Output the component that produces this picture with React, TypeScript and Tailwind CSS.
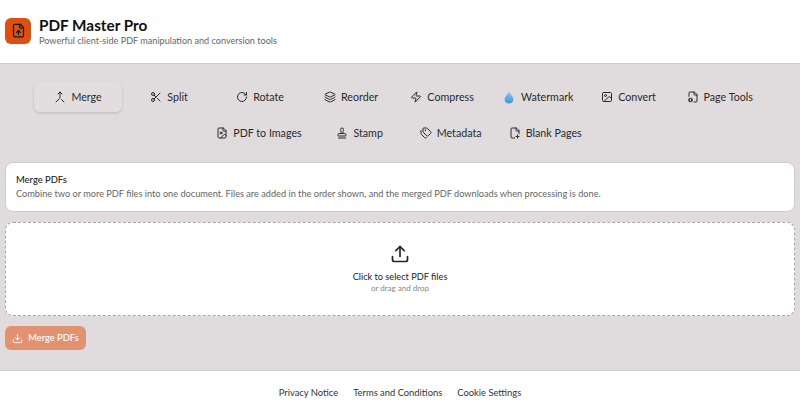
import { Download, FileCog, FileImage, FilePlus2, FileUp, Image, Layers, Merge, RotateCw, Scissors, Stamp, Tags, Upload, Zap } from 'lucide-react'
import type { ComponentType } from 'react'

function Droplet() {
  return (
    <svg viewBox="0 0 10 13" className="mr-[2px] h-[13px] w-[10px] shrink-0">
      <defs>
        <linearGradient id="drop" x1="0" y1="0" x2="0" y2="1">
          <stop offset="0" stopColor="#8fc4ee" />
          <stop offset="1" stopColor="#3f95dc" />
        </linearGradient>
      </defs>
      <path d="M5 0.5C5.5 2.4 9.4 5.4 9.4 8.5C9.4 11 7.4 12.6 5 12.6C2.6 12.6 0.6 11 0.6 8.5C0.6 5.4 4.5 2.4 5 0.5Z" fill="url(#drop)" />
    </svg>
  )
}

type Tab = { label: string; icon: ComponentType<{ className?: string }>; active?: boolean; pad?: string }

const rowOne: Tab[] = [
  { label: 'Merge', icon: Merge, active: true },
  { label: 'Split', icon: Scissors },
  { label: 'Rotate', icon: RotateCw },
  { label: 'Reorder', icon: Layers },
  { label: 'Compress', icon: Zap },
  { label: 'Watermark', icon: Droplet, pad: 'pl-[15px] pr-[8px]' },
  { label: 'Convert', icon: Image },
  { label: 'Page Tools', icon: FileCog },
]

const rowTwo: Tab[] = [
  { label: 'PDF to Images', icon: FileImage },
  { label: 'Stamp', icon: Stamp },
  { label: 'Metadata', icon: Tags },
  { label: 'Blank Pages', icon: FilePlus2 },
]

function TabButton({ tab }: { tab: Tab }) {
  const Icon = tab.icon
  return (
    <button
      className={
        'flex h-[30px] min-w-[88px] items-center justify-center gap-[5px] rounded-md text-[10.7px] text-[#2a2a2a] ' +
        (tab.pad ?? 'px-[11px]') + ' ' +
        (tab.active ? 'bg-[#e2dee0] shadow-[0_1px_3px_rgba(0,0,0,0.16)]' : '')
      }
    >
      <Icon className="h-[12px] w-[12px] shrink-0" />
      {tab.label}
    </button>
  )
}

export default function App() {
  return (
    <div className="flex h-[411px] flex-col overflow-hidden bg-white font-['Lato',sans-serif]">
      {/* Header */}
      <header className="flex h-[64px] shrink-0 items-center gap-[8px] border-b border-[#cfcccc] bg-white pb-[2px] pl-[5px]">
        <div className="flex h-[26px] w-[26px] items-center justify-center rounded-md bg-[#e04f12]">
          <FileUp className="h-[15px] w-[15px] text-[#1c1c1c]" />
        </div>
        <div className="pt-[2px]">
          <h1 className="text-[15.3px] leading-[18px] font-bold text-[#111]">PDF Master Pro</h1>
          <p className="text-[9.1px] leading-[13px] text-[#666]">Powerful client-side PDF manipulation and conversion tools</p>
        </div>
      </header>

      {/* Main */}
      <main className="flex flex-1 flex-col bg-[#e0dcde] px-[5px] pt-[18px]">
        <div className="flex flex-col gap-[6px] pr-[2px]">
          <div className="flex justify-center gap-[3px]">
            {rowOne.map(t => <TabButton key={t.label} tab={t} />)}
          </div>
          <div className="flex justify-center gap-[3px]">
            {rowTwo.map(t => <TabButton key={t.label} tab={t} />)}
          </div>
        </div>

        <div className="mt-[14px] h-[50px] rounded-lg border border-[#d0cccc] bg-white px-[10px] pt-[10px]">
          <h2 className="text-[9.4px] leading-[14px] font-medium text-[#222]">Merge PDFs</h2>
          <p className="text-[9.2px] leading-[14px] text-[#666]">
            Combine two or more PDF files into one document. Files are added in the order shown, and the merged PDF downloads when processing is done.
          </p>
        </div>

        <div className="mt-[10px] flex h-[94px] flex-col items-center justify-center rounded-lg border-[1.5px] border-dashed border-[#a8a4a4] bg-white">
          <Upload className="h-[20px] w-[20px] text-[#222]" />
          <p className="mt-[6px] text-[9.2px] leading-[13px] text-[#222]">Click to select PDF files</p>
          <p className="text-[8px] leading-[11px] text-[#888]">or drag and drop</p>
        </div>

        <button className="mt-[10px] flex h-[24px] w-[81px] items-center justify-center gap-[5px] rounded-md bg-[#e29270] text-[9.3px] font-medium text-white">
          <Download className="h-[11px] w-[11px]" />
          Merge PDFs
        </button>
      </main>

      {/* Footer */}
      <footer className="flex h-[41px] shrink-0 items-center justify-center gap-[15px] border-t border-[#cfcccc] bg-white pt-[5px] text-[9.4px] text-[#333]">
        <a>Privacy Notice</a>
        <a>Terms and Conditions</a>
        <a>Cookie Settings</a>
      </footer>
    </div>
  )
}
